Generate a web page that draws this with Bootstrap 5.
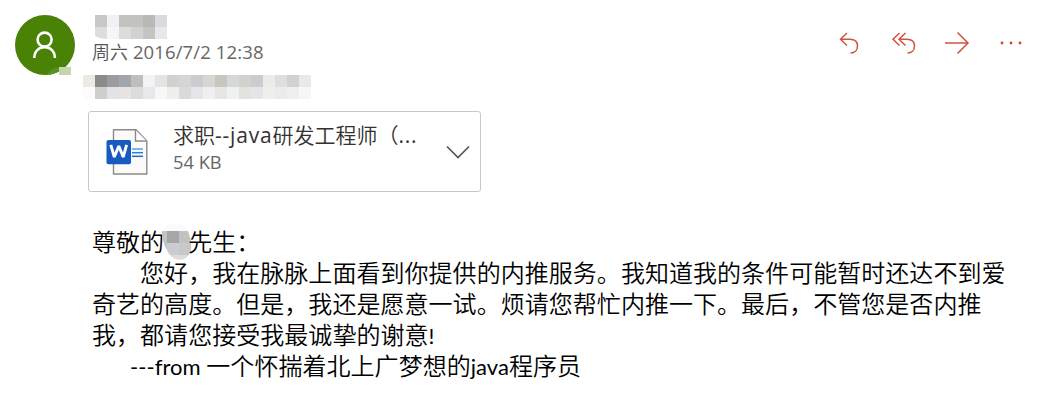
<!DOCTYPE html>
<html lang="zh-CN">
<head>
    <meta charset="UTF-8">
    <meta name="viewport" content="width=device-width, initial-scale=1.0">
    <title>邮件</title>
    <!-- Bootstrap CSS -->
    <link href="https://cdn.jsdelivr.net/npm/bootstrap@5.3.0/dist/css/bootstrap.min.css" rel="stylesheet">
    <style>
        body {
            font-family: "Open Sans", "Noto Sans CJK SC", sans-serif;
            background-color: #fff;
            overflow: hidden;
        }
        .mail-head {
            height: 111px;
            padding: 15px 20px 0 15px;
        }
        .avatar {
            width: 60px;
            height: 60px;
        }
        .sender {
            margin-left: 8px;
        }
        .mosaic {
            display: grid;
            grid-auto-rows: 12px;
            overflow: hidden;
        }
        .mosaic-name {
            grid-template-columns: repeat(6, 12px);
            margin-left: 12px;
            border-bottom-left-radius: 14px 4px;
        }
        .mosaic-to {
            grid-template-columns: repeat(19, 12px);
        }
        .sent-date {
            height: 36px;
            padding-left: 9px;
            font-size: 18px;
            line-height: 26px;
            font-weight: 350;
            color: #555351;
            white-space: pre;
        }
        .sent-date .num {
            font-size: 18.5px;
            font-weight: 400;
            letter-spacing: 0.12px;
            color: #686664;
        }
        .actions {
            height: 56px;
        }
        .attachment {
            width: 393px;
            height: 81px;
            margin-left: 88px;
            padding: 0 10px 0 17px;
            border: 1px solid #c8c8c8;
            border-radius: 3px;
        }
        .file-info {
            margin-left: 24px;
            white-space: nowrap;
            padding-bottom: 7px;
        }
        .file-name {
            font-size: 21px;
            line-height: 28px;
            font-weight: 350;
            color: #323130;
        }
        .file-name .num {
            font-weight: 400;
            letter-spacing: 0.8px;
        }
        .file-size {
            font-size: 18.3px;
            line-height: 26px;
            color: #686664;
        }
        .mail-text {
            margin: 33px 0 0 92px;
            font-family: "Noto Sans CJK SC", sans-serif;
            font-weight: 350;
            font-size: 24px;
            line-height: 31px;
            letter-spacing: 0.04px;
            color: #000;
        }
        .mail-text div {
            height: 31px;
            white-space: pre;
        }
        .mail-text .signature {
            padding-left: 38px;
        }
        .latin {
            font-family: Lato, "Open Sans", sans-serif;
            font-size: 22px;
            font-weight: 400;
            line-height: 1;
        }
        .hidden-name {
            width: 31px;
            height: 38px;
            margin: -2px -4px 0 -3px;
            vertical-align: top;
        }
    </style>
</head>
<body>
    <!-- Cabecera del correo -->
    <header class="mail-head d-flex justify-content-between">
        <div class="d-flex">
            <svg class="avatar flex-shrink-0" viewBox="0 0 60 60">
                <clipPath id="disc"><circle cx="30" cy="30" r="30"/></clipPath>
                <circle cx="30" cy="30" r="30" fill="#498205"/>
                <path d="M32 60 C35 54 40 52.500 44 52.500 V60Z" fill="#5a8f24" clip-path="url(#disc)"/>
                <rect x="44" y="52" width="12" height="8" fill="#c4d6ac"/>
                <g fill="none" stroke="#fff" stroke-width="2.600">
                    <circle cx="29.600" cy="24.600" r="7"/>
                    <path d="M19.300 43 C19.300 28.500 39.900 28.500 39.900 43"/>
                </g>
            </svg>
            <div class="sender">
                <div class="mosaic mosaic-name" data-colors="c8c8c8 eff1f4 c3c2be c2c2c1 b9bab7 dadbde ddddde f6f6f6 dddcda d2d2d2 c5c4c2 e7e8ea"></div>
                <div class="sent-date">周六<span class="num"> 2016/7/2 12:38</span></div>
                <div class="mosaic mosaic-to" data-colors="edeae6 8b8c89 9c9c9e a2a6ac bebebe f3f3f3 e4e4e4 d1d2cd d5d5d8 cbccd0 d6d6d6 c9c5bf d4d8d9 d3d1cd cbcccf ebebea e0dddc cfd2d1 e9e9e9 fcfcfc d0cfcb e1e3e6 e7e4e3 dcdcdc e6e8eb f7f7f7 eeeeed dadada e5e6e9 efefef e8e6e4 eff1f0 e2e2e1 e4e6e5 eeeeed ebebeb efefef f7f7f7"></div>
            </div>
        </div>
        <!-- Acciones -->
        <svg class="actions" width="189" height="56" viewBox="835 15 189 56" fill="none" stroke="#d05440" stroke-width="1.500">
            <path d="M847 33 L840.500 39.200 L847 45.500 M840.500 39.200 H850 C855 39.200 857.500 42 857.500 46 C857.500 50 855 53 850.500 53"/>
            <path d="M899.500 33 L893 39.200 L899.500 45.500 M905.500 33 L899 39.200 L905.500 45.500 M899 39.200 H907 C912 39.200 914.500 42 914.500 46 C914.500 50 912 53 907.500 53"/>
            <path d="M945 43 H967.500 M957.500 32.500 L968 43 L957.500 53.500"/>
            <g fill="#d24726" stroke="none">
                <circle cx="1002" cy="43" r="1.400"/>
                <circle cx="1011" cy="43" r="1.400"/>
                <circle cx="1020" cy="43" r="1.400"/>
            </g>
        </svg>
    </header>

    <!-- Adjunto -->
    <div class="attachment d-flex align-items-center">
        <svg class="flex-shrink-0" width="43" height="48" viewBox="106 128 43 48">
            <path d="M113.500 129.700 H136 L146.800 141 V174 H113.500 Z" fill="#fafafa" stroke="#8a8a86" stroke-width="1.400" stroke-linejoin="round"/>
            <path d="M135.500 130 V141 H146.500" fill="#fff" stroke="#8a8a86" stroke-width="1.400"/>
            <path d="M132 149 H143" stroke="#4aa5ee" stroke-width="1.500"/>
            <path d="M132 152.700 H143" stroke="#2b7cd3" stroke-width="1.500"/>
            <path d="M132 156.300 H143" stroke="#2368c4" stroke-width="1.500"/>
            <rect x="106.500" y="140" width="24.500" height="24.300" rx="2" fill="#185abd"/>
            <path d="M110.800 144.800 L114.300 157 L118.800 146 L123.200 157 L126.600 144.800" fill="none" stroke="#fff" stroke-width="2.900" stroke-linejoin="bevel"/>
        </svg>
        <div class="file-info flex-grow-1">
            <div class="file-name">求职<span class="num">--java</span>研发工程师（<span class="num">...</span></div>
            <div class="file-size">54 KB</div>
        </div>
        <svg class="flex-shrink-0" width="24" height="14" viewBox="0 0 24 14" fill="none" stroke="#555" stroke-width="1.700">
            <path d="M1 1.500 L12 12.500 L23 1.500"/>
        </svg>
    </div>

    <!-- Texto del mensaje -->
    <main class="mail-text">
        <div>尊敬的<svg class="hidden-name" viewBox="161 223 31 38"><clipPath id="blob"><path d="M162 231 C166 221 184 220 188 231 C190 237 192 244 191 250 C188 263 172 263 167 250 C163 243 162 237 162 231Z"/></clipPath><g clip-path="url(#blob)"><path d="M160 220 H193 V231 H160Z" fill="#fafafa"/><path d="M160 231 H167 V262 H160Z" fill="#c2c3c6"/><path d="M167 231 H179 V243 H167Z" fill="#a6a6a7"/><path d="M179 231 H193 V243 H179Z" fill="#c1c2c1"/><path d="M167 243 H179 V255 H167Z" fill="#cbccd0"/><path d="M179 243 H193 V255 H179Z" fill="#c8c8c8"/><path d="M165 255 H193 V262 H165Z" fill="#dcdcdc"/></g></svg>先生：</div>
        <div>　　您好，我在脉脉上面看到你提供的内推服务。我知道我的条件可能暂时还达不到爱</div>
        <div>奇艺的高度。但是，我还是愿意一试。烦请您帮忙内推一下。最后，不管您是否内推</div>
        <div>我，都请您接受我最诚挚的谢意<span class="latin">!</span></div>
        <div class="signature"><span class="latin">---from </span>一个怀揣着北上广梦想的<span class="latin">java</span>程序员</div>
    </main>

    <!-- Bootstrap JS -->
    <script src="https://cdn.jsdelivr.net/npm/bootstrap@5.3.0/dist/js/bootstrap.bundle.min.js"></script>
    <script>
        // Rellena cada mosaico con sus celdas de color
        document.querySelectorAll('.mosaic').forEach(mosaic => {
            mosaic.dataset.colors.split(' ').forEach(color => {
                const cell = document.createElement('span');
                cell.style.backgroundColor = '#' + color;
                mosaic.appendChild(cell);
            });
        });
    </script>
</body>
</html>
